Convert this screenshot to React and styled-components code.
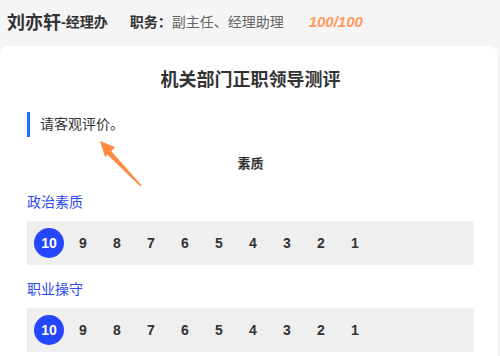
import React from "react";
import styled, { createGlobalStyle } from "styled-components";

const GlobalStyle = createGlobalStyle`
  html, body {
    margin: 0;
    padding: 0;
    background: #f5f5f5;
    font-family: "Liberation Sans", "Noto Sans CJK SC", sans-serif;
    color: #333;
  }
`;

const Page = styled.div`
  width: 500px;
  height: 356px;
  overflow: hidden;
`;

const Header = styled.header`
  height: 42px;
  padding: 0 0 4px 7px;
  display: flex;
  align-items: center;
  white-space: nowrap;
`;

const Name = styled.span`
  font-size: 18px;
  font-weight: 700;
  color: #333;
`;

const Dept = styled.span`
  font-size: 14px;
  font-weight: 700;
  color: #333;
`;

const PostLabel = styled.span`
  margin-left: 22px;
  font-size: 14px;
  font-weight: 700;
  color: #333;
`;

const PostValue = styled.span`
  font-size: 14px;
  color: #666;
`;

const Score = styled.span`
  margin-left: 25px;
  font-size: 15px;
  font-weight: 700;
  font-style: italic;
  color: #ff9a5c;
`;

const Card = styled.main`
  position: relative;
  margin-right: 3px;
  padding: 0 23px 0 27px;
  background: #fff;
  border-radius: 8px 8px 0 0;
  min-height: 310px;
`;

const Title = styled.h1`
  margin: 0;
  padding-top: 22px;
  font-size: 18px;
  line-height: 24px;
  font-weight: 700;
  text-align: center;
  color: #333;
`;

const Tip = styled.div`
  margin-top: 20px;
  height: 25px;
  line-height: 25px;
  padding-left: 10px;
  border-left: 3px solid #1e6fff;
  font-size: 14px;
  color: #333;
`;

const Section = styled.div`
  margin-top: 17px;
  line-height: 20px;
  font-size: 13px;
  font-weight: 700;
  text-align: center;
  color: #333;
`;

const Label = styled.div`
  margin-top: ${({ $first }) => ($first ? "18px" : "14px")};
  line-height: 20px;
  font-size: 14px;
  color: #2b4bf5;
`;

const Scale = styled.div`
  margin-top: 9px;
  height: 44px;
  padding-left: 7px;
  display: flex;
  align-items: center;
  gap: 4px;
  background: #efefef;
`;

const Point = styled.span`
  width: 30px;
  height: 30px;
  border-radius: 50%;
  display: flex;
  align-items: center;
  justify-content: center;
  font-family: "Liberation Sans", sans-serif;
  font-size: 14px;
  font-weight: 700;
  color: ${({ $active }) => ($active ? "#fff" : "#333")};
  background: ${({ $active }) => ($active ? "#2446ff" : "transparent")};
`;

const Arrow = styled.svg`
  position: absolute;
  left: 90px;
  top: 84px;
  width: 60px;
  height: 65px;
`;

const points = [10, 9, 8, 7, 6, 5, 4, 3, 2, 1];

const Item = ({ label, value, first }) => (
  <>
    <Label $first={first}>{label}</Label>
    <Scale>
      {points.map((p) => (
        <Point key={p} $active={p === value}>
          {p}
        </Point>
      ))}
    </Scale>
  </>
);

export default function App() {
  return (
    <Page>
      <GlobalStyle />
      <Header>
        <Name>刘亦轩</Name>
        <Dept>-经理办</Dept>
        <PostLabel>职务：</PostLabel>
        <PostValue>副主任、经理助理</PostValue>
        <Score>100/100</Score>
      </Header>
      <Card>
        <Title>机关部门正职领导测评</Title>
        <Tip>请客观评价。</Tip>
        <Section>素质</Section>
        <Item label="政治素质" value={10} first />
        <Item label="职业操守" value={10} />
        <Arrow viewBox="0 0 60 65">
          <polygon
            points="10,11 25,17 21.3,21.3 51.6,55.5 50.4,56.5 17.6,24.7 15,27"
            fill="#ff8a3d"
          />
        </Arrow>
      </Card>
    </Page>
  );
}
